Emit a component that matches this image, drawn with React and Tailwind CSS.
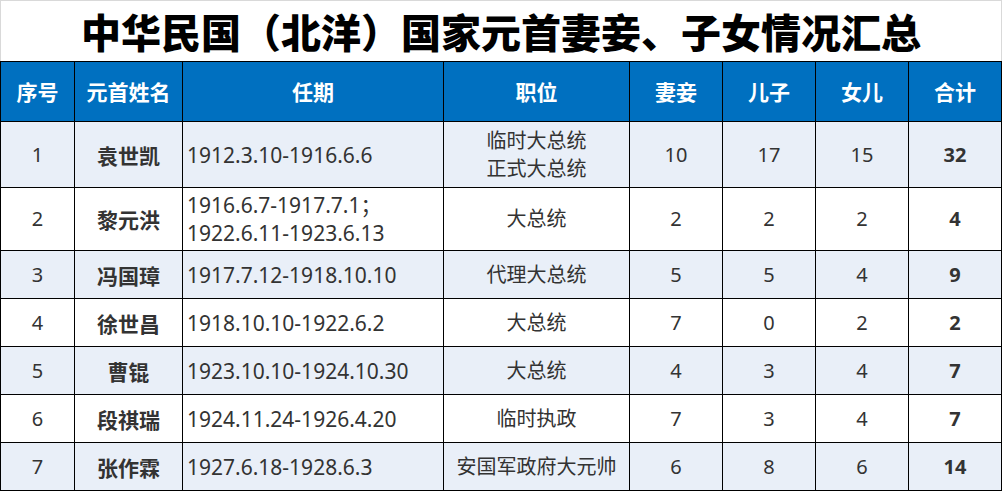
const rows = [
  { no: 1, name: "袁世凯", term: ["1912.3.10-1916.6.6"], post: ["临时大总统", "正式大总统"], wives: 10, sons: 17, daughters: 15, total: 32 },
  { no: 2, name: "黎元洪", term: ["1916.6.7-1917.7.1；", "1922.6.11-1923.6.13"], post: ["大总统"], wives: 2, sons: 2, daughters: 2, total: 4 },
  { no: 3, name: "冯国璋", term: ["1917.7.12-1918.10.10"], post: ["代理大总统"], wives: 5, sons: 5, daughters: 4, total: 9 },
  { no: 4, name: "徐世昌", term: ["1918.10.10-1922.6.2"], post: ["大总统"], wives: 7, sons: 0, daughters: 2, total: 2 },
  { no: 5, name: "曹锟", term: ["1923.10.10-1924.10.30"], post: ["大总统"], wives: 4, sons: 3, daughters: 4, total: 7 },
  { no: 6, name: "段祺瑞", term: ["1924.11.24-1926.4.20"], post: ["临时执政"], wives: 7, sons: 3, daughters: 4, total: 7 },
  { no: 7, name: "张作霖", term: ["1927.6.18-1928.6.3"], post: ["安国军政府大元帅"], wives: 6, sons: 8, daughters: 6, total: 14 },
];

const headers = ["序号", "元首姓名", "任期", "职位", "妻妾", "儿子", "女儿", "合计"];

function Cell({ children, odd, className = "" }) {
  return (
    <div
      className={`flex items-center justify-center text-[20px] leading-[28px] text-[#333333] ${
        odd ? "bg-[#e9eff8]" : "bg-white"
      } ${className}`}>
      {children}
    </div>
  );
}

export default function App() {
  return (
    <div
      className="w-[1002px] h-[491px] overflow-hidden bg-white"
      style={{ fontFamily: '"Noto Sans", "Noto Sans CJK SC", sans-serif' }}>
      <div className="flex h-[61px] items-center justify-center border border-b-0 border-[#d9d9d9]">
        <h1
          className="text-[40px] font-black leading-none text-black"
          style={{ fontFamily: '"Noto Sans CJK SC", sans-serif' }}>
          中华民国（北洋）国家元首妻妾、子女情况汇总
        </h1>
      </div>

      <div className="grid grid-cols-[73px_107px_260px_185px_92px_92px_92px_92px] grid-rows-[59px_65px_62px_47px_47px_47px_47px_47px] gap-px bg-black p-px">
        {headers.map((h) => (
          <div
            key={h}
            className="flex items-center justify-center bg-[#0070c0] text-[21px] font-bold text-white"
            style={{ fontFamily: '"Noto Sans CJK SC", sans-serif' }}>
            {h}
          </div>
        ))}

        {rows.map((r) => {
          const odd = r.no % 2 === 1;
          return [
            <Cell key={`${r.no}-no`} odd={odd}>{r.no}</Cell>,
            <Cell key={`${r.no}-name`} odd={odd} className="text-[21px] font-bold">
              <span style={{ fontFamily: '"Noto Sans CJK SC", sans-serif' }}>{r.name}</span>
            </Cell>,
            <Cell key={`${r.no}-term`} odd={odd} className="!justify-start pl-[4px] !text-[21px]">
              <div className="flex flex-col">
                {r.term.map((t) => (
                  <span key={t}>{t}</span>
                ))}
              </div>
            </Cell>,
            <Cell key={`${r.no}-post`} odd={odd}>
              <div className="flex flex-col items-center">
                {r.post.map((p) => (
                  <span key={p}>{p}</span>
                ))}
              </div>
            </Cell>,
            <Cell key={`${r.no}-w`} odd={odd}>{r.wives}</Cell>,
            <Cell key={`${r.no}-s`} odd={odd}>{r.sons}</Cell>,
            <Cell key={`${r.no}-d`} odd={odd}>{r.daughters}</Cell>,
            <Cell key={`${r.no}-t`} odd={odd} className="font-bold">{r.total}</Cell>,
          ];
        })}
      </div>
    </div>
  );
}
